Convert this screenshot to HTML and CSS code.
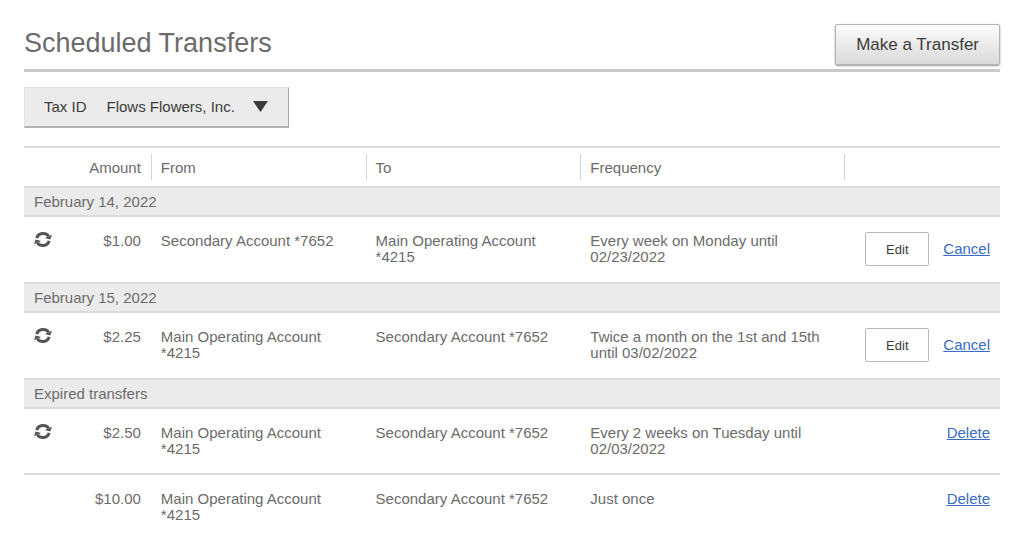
FILE: index.html
```html
<!DOCTYPE html>
<html lang="en">
<head>
    <meta charset="UTF-8">
    <meta name="viewport" content="width=device-width, initial-scale=1.0">
    <title>Scheduled Transfers</title>
    <link rel="stylesheet" href="styles.css">
</head>
<body>
    <svg class="sprite" aria-hidden="true">
        <symbol id="repeat" viewBox="0 0 17 16">
            <path d="M2.6 6.6 A6.2 5.6 0 0 1 13.8 4.8" fill="none" stroke="currentColor" stroke-width="2.9"/>
            <path d="M14.4 9.4 A6.2 5.6 0 0 1 3.2 11.2" fill="none" stroke="currentColor" stroke-width="2.9"/>
            <path d="M17 3.4 L15.4 8 L10.2 6.6 Z" fill="currentColor"/>
            <path d="M0 12.6 L1.6 8 L6.8 9.4 Z" fill="currentColor"/>
        </symbol>
    </svg>

    <header class="page-header">
        <h1>Scheduled Transfers</h1>
        <button type="button" class="primary">Make a Transfer</button>
    </header>

    <div class="filter">
        <label for="taxId">Tax ID</label>
        <div class="picker">
            <select id="taxId">
                <option>Flows Flowers, Inc.</option>
            </select>
            <svg class="arrow" viewBox="0 0 15 11" aria-hidden="true"><path d="M0 0 H15 L7.5 11 Z"/></svg>
        </div>
    </div>

    <table class="transfers">
        <colgroup>
            <col class="col-icon">
            <col class="col-amount">
            <col class="col-account">
            <col class="col-account">
            <col class="col-frequency">
            <col class="col-actions">
        </colgroup>
        <thead>
            <tr>
                <th></th>
                <th class="amount"><span>Amount</span></th>
                <th><span>From</span></th>
                <th><span>To</span></th>
                <th><span>Frequency</span></th>
                <th><span></span></th>
            </tr>
        </thead>
        <tbody>
            <tr class="group">
                <th colspan="6">February 14, 2022</th>
            </tr>
            <tr>
                <td class="repeat"><svg class="icon" role="img" aria-label="Repeating"><use href="#repeat"/></svg></td>
                <td class="amount">$1.00</td>
                <td>Secondary Account *7652</td>
                <td>Main Operating Account *4215</td>
                <td>Every week on Monday until 02/23/2022</td>
                <td class="actions">
                    <div>
                        <button type="button" class="edit">Edit</button>
                        <a href="#">Cancel</a>
                    </div>
                </td>
            </tr>
        </tbody>
        <tbody>
            <tr class="group">
                <th colspan="6">February 15, 2022</th>
            </tr>
            <tr>
                <td class="repeat"><svg class="icon" role="img" aria-label="Repeating"><use href="#repeat"/></svg></td>
                <td class="amount">$2.25</td>
                <td>Main Operating Account *4215</td>
                <td>Secondary Account *7652</td>
                <td>Twice a month on the 1st and 15th until 03/02/2022</td>
                <td class="actions">
                    <div>
                        <button type="button" class="edit">Edit</button>
                        <a href="#">Cancel</a>
                    </div>
                </td>
            </tr>
        </tbody>
        <tbody>
            <tr class="group">
                <th colspan="6">Expired transfers</th>
            </tr>
            <tr>
                <td class="repeat"><svg class="icon" role="img" aria-label="Repeating"><use href="#repeat"/></svg></td>
                <td class="amount">$2.50</td>
                <td>Main Operating Account *4215</td>
                <td>Secondary Account *7652</td>
                <td>Every 2 weeks on Tuesday until 02/03/2022</td>
                <td class="actions"><div><a href="#">Delete</a></div></td>
            </tr>
            <tr>
                <td></td>
                <td class="amount">$10.00</td>
                <td>Main Operating Account *4215</td>
                <td>Secondary Account *7652</td>
                <td>Just once</td>
                <td class="actions"><div><a href="#">Delete</a></div></td>
            </tr>
        </tbody>
    </table>
</body>
</html>
```

FILE: styles.css
```css
* {
    box-sizing: border-box;
}

body {
    margin: 0;
    padding: 24px 24px 0;
    font-family: "Liberation Sans", Arial, sans-serif;
    font-size: 15px;
    line-height: 16px;
    color: #6b6b6b;
    background: #fff;
}

.sprite {
    display: none;
}

button,
select {
    font-family: inherit;
    color: #3c3c3c;
    cursor: pointer;
}

/* Header */
.page-header {
    display: flex;
    justify-content: space-between;
    align-items: flex-start;
    padding-bottom: 4px;
    border-bottom: 3px solid #c9c9c9;
}

h1 {
    margin: 0;
    font-size: 27px;
    line-height: 38px;
    font-weight: normal;
}

.primary {
    height: 41px;
    padding: 0 20px;
    font-size: 17px;
    border: 1px solid #b4b4b4;
    border-radius: 2px;
    background: linear-gradient(#fcfcfc, #dadada);
    box-shadow: 0 1px 2px rgba(0, 0, 0, 0.4);
}

/* Tax ID filter */
.filter {
    display: inline-flex;
    align-items: center;
    gap: 20px;
    height: 41px;
    margin: 15px 0 18px;
    padding: 0 20px 0 19px;
    color: #3c3c3c;
    background: #ebebeb;
    border: 1px solid #e2e2e2;
    border-right-color: #a8a8a8;
    border-bottom: 2px solid #b4b4b4;
}

.picker {
    display: flex;
    position: relative;
}

select {
    appearance: none;
    height: 16px;
    padding: 0 32px 0 0;
    font-size: 15px;
    line-height: 16px;
    border: none;
    background: none;
}

.arrow {
    position: absolute;
    top: 2px;
    right: 0;
    width: 15px;
    height: 11px;
    fill: #3c3c3c;
    pointer-events: none;
}

/* Transfers table */
.transfers {
    width: 100%;
    table-layout: fixed;
    border-spacing: 0;
}

.col-icon {
    width: 4%;
}

.col-amount {
    width: 9%;
}

.col-account {
    width: 22%;
}

.col-frequency {
    width: 27%;
}

.col-actions {
    width: 16%;
}

th,
td {
    padding: 0;
    border-top: 2px solid #dadada;
    font-weight: normal;
    text-align: left;
}

thead th {
    height: 40px;
}

thead span {
    display: block;
    height: 26px;
    padding-left: 9px;
    line-height: 28px;
    border-left: 1px solid #d4d4d4;
}

thead .amount span {
    border-left: none;
}

td {
    padding: 16px 10px;
    vertical-align: top;
}

thead .amount,
td.amount {
    padding-left: 0;
    text-align: right;
    padding-right: 10px;
}

.group th {
    height: 29px;
    padding: 0 10px;
    background: #ebebeb;
}

td.repeat {
    padding-top: 14px;
}

.icon {
    display: block;
    width: 18px;
    height: 17px;
    color: #555;
}

td.actions {
    padding: 15px 10px 16px;
    line-height: 18px;
}

.actions div {
    display: flex;
    justify-content: flex-end;
    align-items: center;
    gap: 14px;
}

.edit {
    width: 64px;
    height: 34px;
    font-size: 13px;
    border: 1px solid #b8b8b8;
    border-radius: 2px;
    background: #fff;
}

a {
    color: #3a6cc4;
}
```
